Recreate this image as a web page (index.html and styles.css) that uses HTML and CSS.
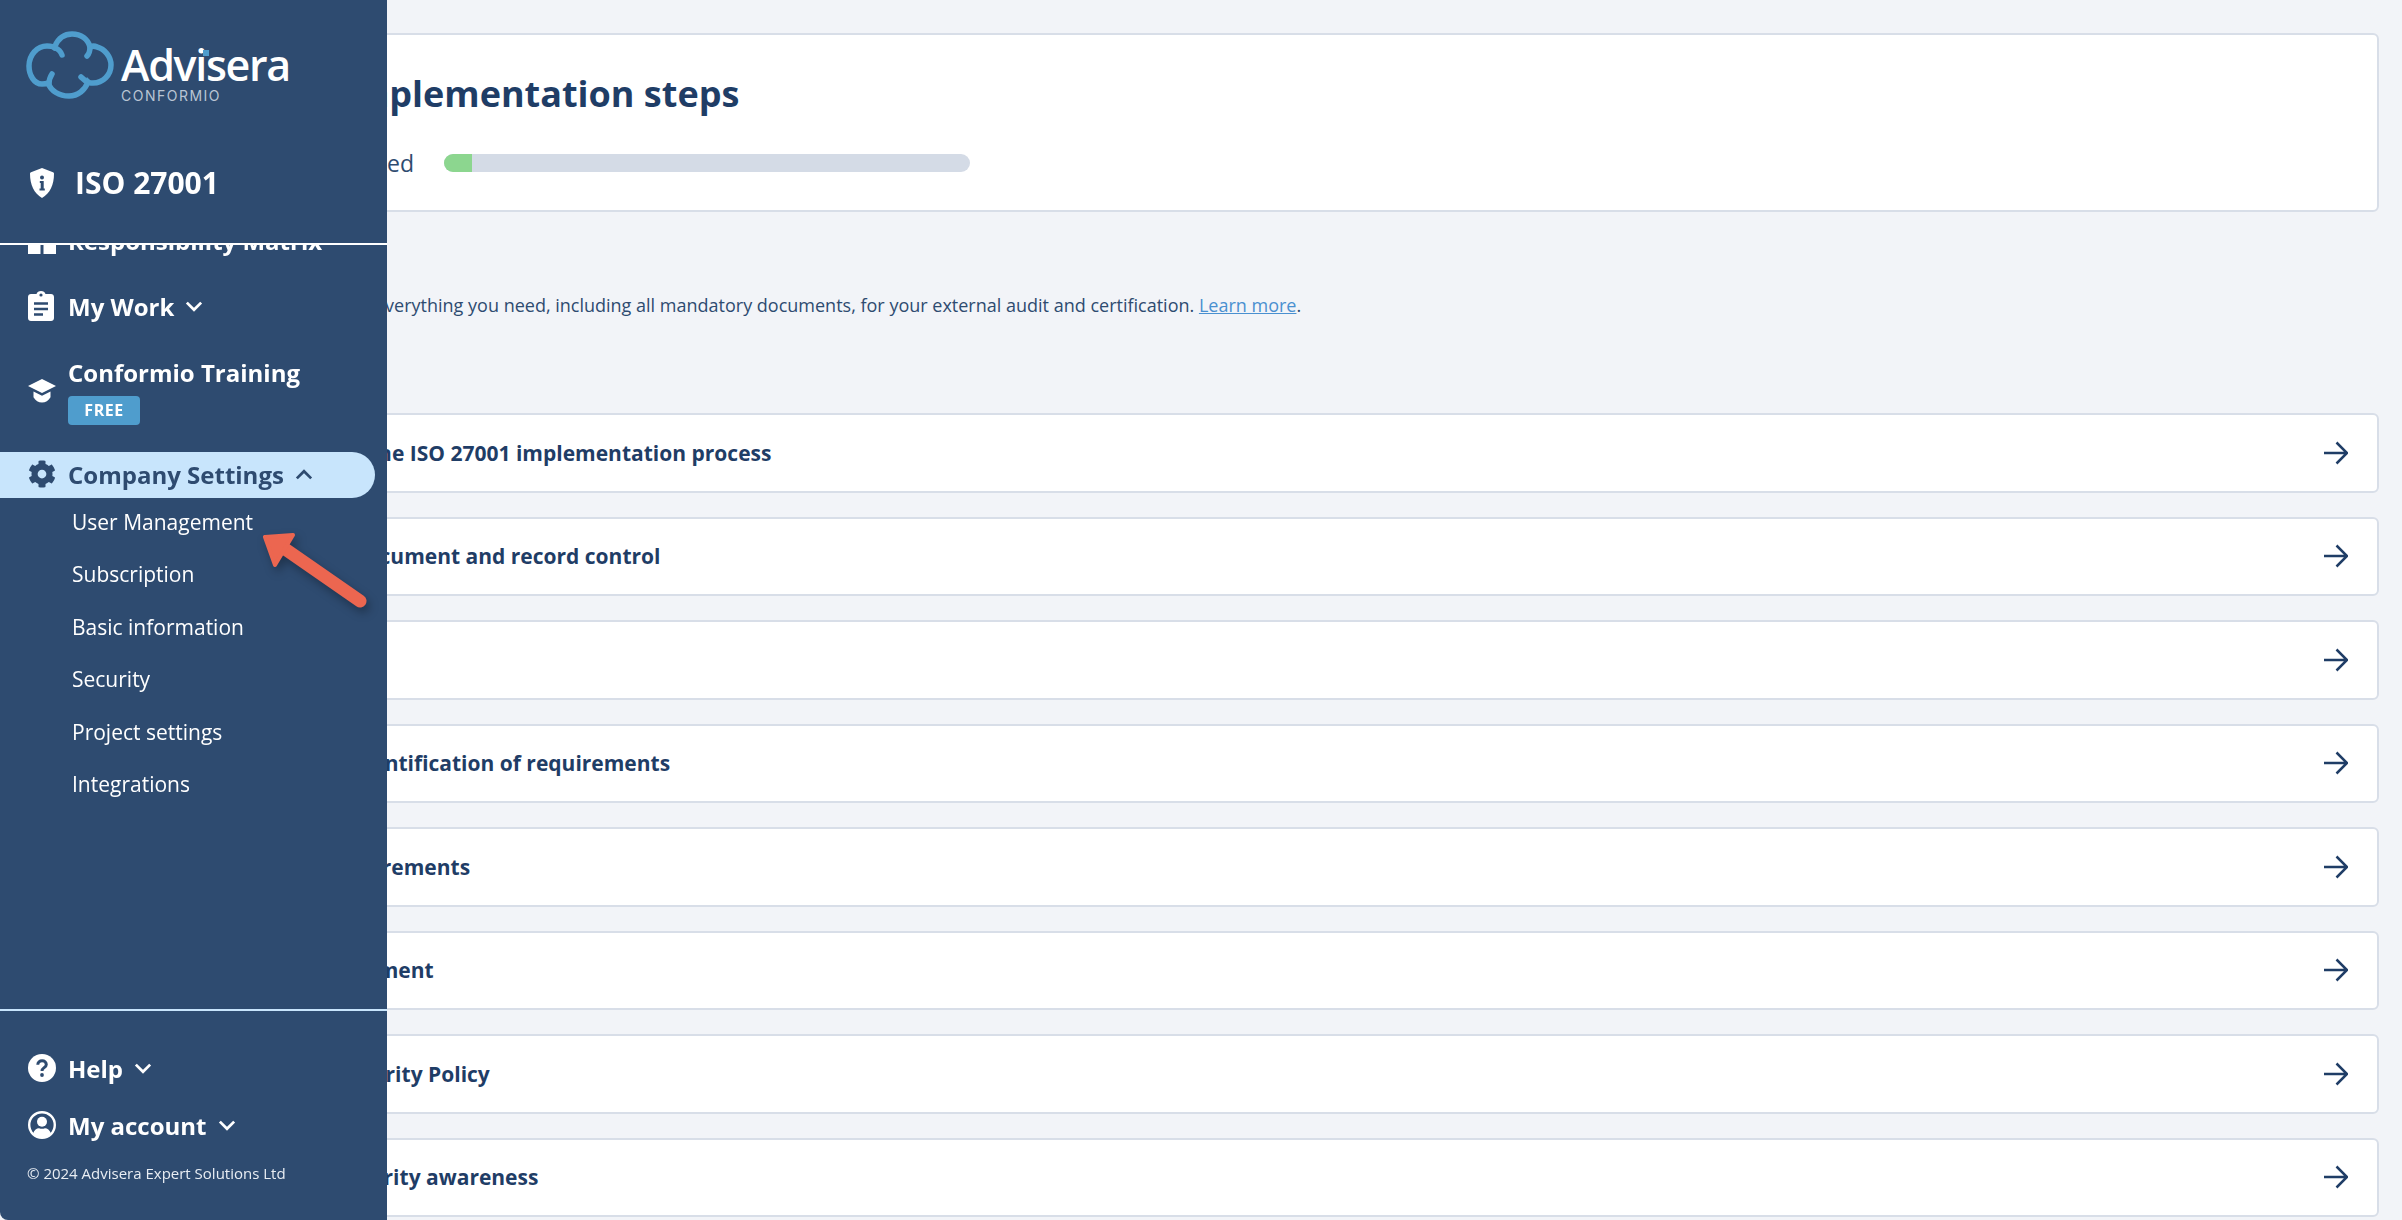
FILE: index.html
```html
<!DOCTYPE html>
<html lang="en">
<head>
  <meta charset="UTF-8">
  <meta name="viewport" content="width=device-width, initial-scale=1">
  <title>Conformio - Implementation steps</title>
  <link rel="stylesheet" href="styles.css">
</head>
<body>
  <aside class="sidebar">
    <div class="side-head">
      <div class="logo">
        <svg class="cloud" viewBox="0 0 88 68" width="88" height="68" fill="none" stroke="#4f9dcd" stroke-width="5.500" stroke-linecap="round">
          <path d="M29 15C33 6 40 3 46 3c9 0 16 5 18 13 2-1 5-1 7 0 8 2 14 10 14 18 0 10-8 18-18 18-2 0-4 0-5-1-3 8-10 14-19 14-10 0-18-5-21-13-2 1-4 1-6 1C8 53 3 44 3 35c0-11 8-20 18-20 3 0 6 0 8 2"/>
          <path d="M29 17c3 1 6 4 7 7"/>
          <path d="M64 16c0 4-1 7-3 9"/>
          <path d="M62 51c-3-1-5-3-7-5"/>
          <path d="M23 53c0-4 1-7 3-10"/>
        </svg>
        <div class="brand">
          <div class="brand-name">Advisera<span class="brand-dot"></span></div>
          <div class="brand-sub">CONFORMIO</div>
        </div>
      </div>
      <div class="product">
        <svg viewBox="0 0 24 30" width="24" height="30">
          <path fill="#fff" d="M12 0l11 4.2c.6.2 1 .8 1 1.400C24 17 20 25.500 12 30 4 25.500 0 17 0 5.600c0-.6.4-1.200 1-1.400z"/>
          <circle cx="12" cy="9.500" r="2" fill="#2e4b70"/>
          <path fill="#2e4b70" d="M9.800 13h3.900v7.500h1.100v2H9.500v-2h1.200v-5.500H9.800z"/>
        </svg>
        <span>ISO 27001</span>
      </div>
    </div>

    <nav class="side-nav">
      <a class="nav-item nav-clipped">
        <svg class="nav-icon" viewBox="0 0 28 28" width="28" height="28" fill="#fff">
          <rect x="0" y="0" width="12.500" height="28"/>
          <rect x="15.500" y="0" width="12.500" height="28"/>
        </svg>
        <span>Responsibility Matrix</span>
      </a>
      <a class="nav-item nav-work">
        <svg class="nav-icon icon-narrow" viewBox="0 0 26 30" width="26" height="30">
          <path fill="#fff" d="M3 3h5.500C9 1.200 10.800 0 13 0s4 1.200 4.500 3H23c1.700 0 3 1.300 3 3v21c0 1.700-1.300 3-3 3H3c-1.700 0-3-1.300-3-3V6c0-1.700 1.300-3 3-3z"/>
          <circle cx="13" cy="4" r="1.600" fill="#2e4b70"/>
          <path stroke="#2e4b70" stroke-width="2.400" d="M6 12.500h14M6 18h14M6 23.500h9"/>
        </svg>
        <span>My Work</span>
        <svg class="chev" viewBox="0 0 16 10" width="18" height="11"><path d="M1.500 1.500L8 8l6.500-6.500"/></svg>
      </a>
      <div class="nav-training">
        <svg class="nav-icon" viewBox="0 0 28 24" width="28" height="24" fill="#fff">
          <path d="M14 0L28 7 14 14 0 7z"/>
          <path d="M5.500 12.500L14 16.800l8.500-4.300v5.700c-2 3.500-5 5.300-8.500 5.300s-6.500-1.800-8.500-5.300z"/>
        </svg>
        <div>
          <div class="training-name">Conformio Training</div>
          <div class="badge">FREE</div>
        </div>
      </div>
      <a class="nav-item nav-active">
        <svg class="nav-icon" viewBox="0 0 512 512" width="28" height="28" fill="#2e4b70">
          <path d="M487.4 315.700l-42.600-24.600c4.300-23.200 4.300-47 0-70.200l42.600-24.600c4.900-2.800 7.100-8.600 5.500-14-11.100-35.600-30-67.800-54.700-94.600-3.800-4.100-10-5.100-14.800-2.300L380.800 110c-17.900-15.400-38.500-27.300-60.800-35.100V25.800c0-5.600-3.900-10.500-9.400-11.700-36.700-8.200-74.300-7.800-109.200 0-5.500 1.200-9.400 6.100-9.400 11.700V75c-22.200 7.900-42.800 19.800-60.800 35.100L88.700 85.500c-4.900-2.800-11-1.900-14.800 2.300-24.700 26.700-43.600 58.900-54.700 94.600-1.700 5.400.6 11.200 5.500 14L67.300 221c-4.300 23.200-4.300 47 0 70.200l-42.600 24.600c-4.900 2.800-7.100 8.600-5.500 14 11.100 35.600 30 67.800 54.700 94.600 3.800 4.100 10 5.100 14.800 2.300l42.600-24.600c17.900 15.400 38.500 27.300 60.800 35.100v49.200c0 5.600 3.900 10.500 9.400 11.700 36.700 8.200 74.300 7.800 109.200 0 5.500-1.200 9.400-6.100 9.400-11.700v-49.200c22.200-7.900 42.800-19.800 60.800-35.100l42.600 24.600c4.900 2.800 11 1.900 14.800-2.300 24.700-26.700 43.600-58.900 54.700-94.600 1.500-5.500-.7-11.300-5.600-14.100zM256 336c-44.100 0-80-35.900-80-80s35.900-80 80-80 80 35.900 80 80-35.900 80-80 80z"/>
        </svg>
        <span>Company Settings</span>
        <svg class="chev" viewBox="0 0 16 10" width="18" height="11"><path d="M1.500 8.500L8 2l6.500 6.500"/></svg>
      </a>
      <ul class="sub-nav">
        <li>User Management</li>
        <li>Subscription</li>
        <li>Basic information</li>
        <li>Security</li>
        <li>Project settings</li>
        <li>Integrations</li>
      </ul>
    </nav>

    <div class="side-foot">
      <a class="nav-item">
        <svg class="nav-icon" viewBox="0 0 28 28" width="28" height="28">
          <circle cx="14" cy="14" r="14" fill="#fff"/>
          <path fill="none" stroke="#2e4b70" stroke-width="3" d="M9.800 10.800c0-2.500 1.900-4 4.300-4 2.500 0 4.200 1.500 4.200 3.600 0 3.300-4.300 3.200-4.300 6.500"/>
          <circle cx="14" cy="21" r="1.900" fill="#2e4b70"/>
        </svg>
        <span>Help</span>
        <svg class="chev" viewBox="0 0 16 10" width="18" height="11"><path d="M1.500 1.500L8 8l6.500-6.500"/></svg>
      </a>
      <a class="nav-item nav-account">
        <svg class="nav-icon" viewBox="0 0 28 28" width="28" height="28">
          <circle cx="14" cy="14" r="12.800" fill="none" stroke="#fff" stroke-width="2.400"/>
          <circle cx="14" cy="10.800" r="5" fill="#fff"/>
          <path fill="#fff" d="M5 22.500c1.200-3.500 3.800-5.300 6-5.300 1 .4 2 .6 3 .6s2-.2 3-.6c2.200 0 4.800 1.800 6 5.300-2.300 2.500-5.500 4.300-9 4.300s-6.700-1.800-9-4.300z"/>
        </svg>
        <span>My account</span>
        <svg class="chev" viewBox="0 0 16 10" width="18" height="11"><path d="M1.500 1.500L8 8l6.500-6.500"/></svg>
      </a>
      <p class="copyright">&copy; 2024 Advisera Expert Solutions Ltd</p>
    </div>
  </aside>

  <svg class="callout" viewBox="0 0 130 100" width="130" height="100">
    <path d="M110 81L25 22" fill="none" stroke="#ec6650" stroke-width="13" stroke-linecap="round"/>
    <path d="M15 17l28-2-18 30z" fill="#ec6650" stroke="#ec6650" stroke-width="4" stroke-linejoin="round"/>
  </svg>

  <main class="content">
    <section class="card summary">
      <h1>Implementation steps</h1>
      <div class="progress-row">
        <div class="progress-label"><span>Completed</span></div>
        <div class="progress-bar"><div class="progress-fill"></div></div>
      </div>
    </section>

    <p class="intro">everything you need, including all mandatory documents, for your external audit and certification. <a href="#">Learn more</a>.</p>

    <div class="steps">
      <a class="card step step-1"><span>the ISO 27001 implementation process</span><svg viewBox="0 0 24 24" width="24" height="24"><path d="M0 12h23M12.500 1.500L23 12 12.500 22.500"/></svg></a>
      <a class="card step step-2"><span>Document and record control</span><svg viewBox="0 0 24 24" width="24" height="24"><path d="M0 12h23M12.500 1.500L23 12 12.500 22.500"/></svg></a>
      <a class="card step"><span></span><svg viewBox="0 0 24 24" width="24" height="24"><path d="M0 12h23M12.500 1.500L23 12 12.500 22.500"/></svg></a>
      <a class="card step step-4"><span>Identification of requirements</span><svg viewBox="0 0 24 24" width="24" height="24"><path d="M0 12h23M12.500 1.500L23 12 12.500 22.500"/></svg></a>
      <a class="card step step-5"><span>Requirements</span><svg viewBox="0 0 24 24" width="24" height="24"><path d="M0 12h23M12.500 1.500L23 12 12.500 22.500"/></svg></a>
      <a class="card step step-6"><span>Assessment</span><svg viewBox="0 0 24 24" width="24" height="24"><path d="M0 12h23M12.500 1.500L23 12 12.500 22.500"/></svg></a>
      <a class="card step step-7"><span>Security Policy</span><svg viewBox="0 0 24 24" width="24" height="24"><path d="M0 12h23M12.500 1.500L23 12 12.500 22.500"/></svg></a>
      <a class="card step step-8"><span>Security awareness</span><svg viewBox="0 0 24 24" width="24" height="24"><path d="M0 12h23M12.500 1.500L23 12 12.500 22.500"/></svg></a>
    </div>
  </main>
</body>
</html>
```

FILE: styles.css
```css
* {
  box-sizing: border-box;
}
html, body {
  height: 100%;
}
body {
  margin: 0;
  overflow: hidden;
  background: #f2f4f8;
  color: #1f3d66;
  font-family: 'Open Sans', sans-serif;
}

/* sidebar sits on top of the page content */
.sidebar {
  position: fixed;
  top: 0;
  left: 0;
  bottom: 0;
  z-index: 2;
  width: 387px;
  display: flex;
  flex-direction: column;
  background: #2e4b70;
  color: #fff;
  border-bottom-left-radius: 8px;
}
.side-head {
  height: 245px;
  flex-shrink: 0;
  padding: 31px 0 0 26px;
  border-bottom: 2px solid #fff;
}
.logo {
  display: flex;
  gap: 7px;
}
.cloud {
  flex-shrink: 0;
}
.brand {
  padding-top: 11px;
}
.brand-name {
  position: relative;
  font-size: 43px;
  font-weight: 600;
  line-height: 46px;
  letter-spacing: -1.300px;
}
.brand-dot {
  position: absolute;
  top: 8px;
  left: 82px;
  width: 6px;
  height: 6px;
  background: #4f9dcd;
}
.brand-sub {
  margin-top: 1px;
  font-family: 'Inter', sans-serif;
  font-size: 14px;
  line-height: 14px;
  letter-spacing: 1.500px;
  color: #b9c5d4;
}
.product {
  display: flex;
  align-items: center;
  gap: 21px;
  margin-top: 60px;
  padding-left: 4px;
  font-size: 30px;
  font-weight: 700;
  line-height: 40px;
}

.side-nav {
  flex: 1;
  min-height: 0;
  overflow: hidden;
}
.nav-item {
  display: flex;
  align-items: center;
  height: 46px;
  padding: 0 0 2px 28px;
  font-size: 24px;
  font-weight: 700;
}
.nav-icon {
  flex-shrink: 0;
  margin-right: 12px;
}
.icon-narrow {
  margin-right: 14px;
}
.chev {
  margin-left: 11px;
  fill: none;
  stroke: currentColor;
  stroke-width: 2.500;
}
.nav-clipped {
  margin-top: -27px;
}
.nav-work {
  margin-top: 20px;
}
.nav-training {
  display: flex;
  align-items: center;
  margin-top: 27px;
  padding-left: 28px;
  font-size: 24px;
  font-weight: 700;
}
.training-name {
  line-height: 32px;
}
.badge {
  width: 72px;
  margin-top: 7px;
  background: #4f9dcd;
  border-radius: 4px;
  font-size: 16px;
  font-weight: 700;
  line-height: 29px;
  text-align: center;
  letter-spacing: 0.500px;
}
.nav-active {
  width: 375px;
  margin-top: 27px;
  background: #c8e5fc;
  border-radius: 0 23px 23px 0;
  color: #2e4b70;
}
.sub-nav {
  margin: -2px 0 0;
  padding: 0 0 0 72px;
  list-style: none;
  font-size: 21px;
}
.sub-nav li {
  height: 52.400px;
  line-height: 52.400px;
}

.side-foot {
  flex-shrink: 0;
  height: 211px;
  padding-top: 35px;
  border-top: 2px solid #c8e5fc;
}
.nav-account {
  margin-top: 11px;
}
.copyright {
  margin: 13px 0 0;
  padding-left: 27px;
  font-size: 15px;
  line-height: 22px;
  color: #e8edf3;
}

.callout {
  position: fixed;
  top: 520px;
  left: 250px;
  z-index: 3;
  filter: drop-shadow(3px 5px 5px rgba(0, 0, 0, 0.3));
}

/* main column, the left part runs under the sidebar */
.content {
  padding: 33px 23px 0 300px;
}
.card {
  background: #fff;
  border: 2px solid #d8dee8;
  border-radius: 6px;
}
.summary {
  padding: 34px 0 32px;
}
.summary h1 {
  margin: 0 0 0 40px;
  font-size: 36px;
  font-weight: 700;
  line-height: 50px;
  color: #1f3d66;
}
.progress-row {
  display: flex;
  align-items: center;
  height: 30px;
  margin-top: 29px;
  font-size: 23px;
  color: #2e4b70;
}
.progress-label {
  display: flex;
  justify-content: flex-end;
  width: 142px;
  flex-shrink: 0;
  padding-right: 30px;
}
.progress-bar {
  width: 526px;
  height: 18px;
  background: #d4dbe6;
  border-radius: 9px;
  overflow: hidden;
}
.progress-fill {
  width: 28px;
  height: 100%;
  background: #8cd68f;
}
.intro {
  margin: 80px 0 0 75px;
  font-size: 18px;
  line-height: 26px;
  color: #2e4b70;
}
.intro a {
  color: #4a90d0;
}
.steps {
  display: flex;
  flex-direction: column;
  gap: 24px;
  margin-top: 95px;
}
.step {
  display: flex;
  align-items: center;
  justify-content: space-between;
  flex-shrink: 0;
  height: 79.500px;
  padding: 0 29px 0 42px;
  font-size: 21px;
  font-weight: 700;
  color: #1f3d66;
}
.step svg {
  flex-shrink: 0;
  fill: none;
  stroke: #1f3d66;
  stroke-width: 2.500;
}
/* first words are hidden behind the sidebar, so each title starts elsewhere */
.step-1 { padding-left: 67px; }
.step-2 { padding-left: 49px; }
.step-4 { padding-left: 50px; }
.step-5 { padding-left: 20px; }
.step-6 { padding-left: 7px; }
.step-7 { padding-left: 35px; }
.step-8 { padding-left: 33px; }
```
